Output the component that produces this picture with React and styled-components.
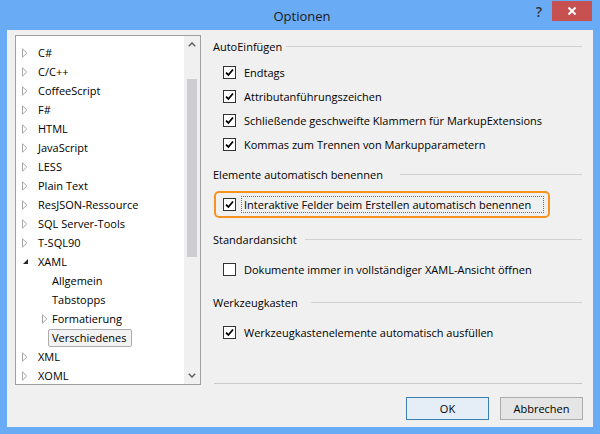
import React from 'react';
import styled, { createGlobalStyle } from 'styled-components';

const GlobalStyle = createGlobalStyle`
  html, body {
    margin: 0;
    padding: 0;
    background: #ffffff;
  }
  body {
    font-family: "Open Sans", "Noto Sans", sans-serif;
    font-size: 11px;
    color: #000;
  }
`;

const Window = styled.div`
  width: 600px;
  height: 434px;
  box-sizing: border-box;
  background-color: #6aabf5;
  padding: 0 7px 7px 7px;
  display: flex;
  flex-direction: column;
`;

const TitleBar = styled.div`
  height: 30px;
  display: flex;
  align-items: flex-start;
  position: relative;
`;

const Title = styled.div`
  flex: 1;
  text-align: center;
  font-size: 13px;
  line-height: 32px;
  color: #1a1a1a;
  padding-left: 4px;
`;

const TitleButtons = styled.div`
  position: absolute;
  right: 1px;
  top: 1px;
  display: flex;
  align-items: flex-start;
`;

const HelpButton = styled.div`
  width: 26px;
  height: 20px;
  font-size: 14px;
  font-weight: 600;
  line-height: 22px;
  text-align: center;
  color: #333;
`;

const CloseButton = styled.div`
  width: 40px;
  height: 20px;
  background-color: #c75050;
  display: flex;
  align-items: center;
  justify-content: center;
`;

const Client = styled.div`
  flex: 1;
  background-color: #f0f0f0;
  display: flex;
  flex-direction: column;
`;

const Main = styled.div`
  display: flex;
  padding-top: 5px;
  height: 350px;
`;

const TreeBox = styled.div`
  margin-left: 8px;
  width: 186px;
  height: 350px;
  box-sizing: border-box;
  border: 1px solid #a0a0a0;
  background: #fff;
  display: flex;
  overflow: hidden;
`;

const TreeList = styled.div`
  flex: 1;
  padding-top: 7px;
  overflow: hidden;
`;

const TreeRow = styled.div`
  height: 19px;
  display: flex;
  align-items: center;
  padding-left: ${p => (p.$level ? 26 : 6)}px;
  white-space: nowrap;
`;

const Expander = styled.div`
  width: ${p => (p.$level ? 10 : 16)}px;
  flex: none;
  display: flex;
  align-items: center;
`;

const TreeLabel = styled.span`
  line-height: 16px;
  padding: 0 4px 0 3px;
  margin-left: -4px;
  border: 1px solid ${p => (p.$selected ? '#adadad' : 'transparent')};
  background: ${p => (p.$selected ? '#f2f2f2' : 'transparent')};
  border-radius: 2px;
`;

const ScrollBar = styled.div`
  width: 16px;
  background: #f0f0f0;
  display: flex;
  flex-direction: column;
  align-items: center;
`;

const ScrollArrow = styled.div`
  height: 17px;
  display: flex;
  align-items: center;
  justify-content: center;
`;

const ScrollTrack = styled.div`
  flex: 1;
  width: 100%;
  padding-top: 26px;
  box-sizing: border-box;
  display: flex;
  justify-content: center;
`;

const Thumb = styled.div`
  width: 10px;
  height: 178px;
  background: #cdcdd1;
`;

const Panel = styled.div`
  flex: 1;
  margin: 0 11px 0 12px;
  display: flex;
  flex-direction: column;
`;

const Group = styled.div`
  margin-top: ${p => p.$top}px;
`;

const GroupHeader = styled.div`
  height: 20px;
  display: flex;
  align-items: center;
`;

const HeaderText = styled.span`
  width: ${p => p.$w}px;
  flex: none;
  white-space: nowrap;
`;

const HeaderLine = styled.div`
  flex: 1;
  height: 1px;
  background: #d2d2d2;
`;

const Rows = styled.div`
  margin-top: ${p => p.$top}px;
`;

const CheckRow = styled.div`
  height: 24px;
  display: flex;
  align-items: center;
  padding-left: 10px;
  gap: 8px;
  white-space: nowrap;
`;

const Highlight = styled.div`
  margin-left: 1px;
  width: 336px;
  height: 27px;
  box-sizing: border-box;
  border: 2px solid #f7931e;
  border-radius: 5px;
  display: flex;
  align-items: center;
  padding-left: 7px;
  gap: 5px;
`;

const FocusLabel = styled.span`
  border: 1px dotted #6d6d6d;
  padding: 0 3px 0 2px;
  width: 303px;
  box-sizing: border-box;
  line-height: 15px;
  white-space: nowrap;
`;

const Box = styled.div`
  width: 13px;
  height: 13px;
  box-sizing: border-box;
  border: 1px solid #333;
  background: #fff;
  flex: none;
  display: flex;
  align-items: center;
  justify-content: center;
`;

const Separator = styled.div`
  margin-top: auto;
  margin-left: 1px;
  height: 1px;
  background: #c8c8c8;
  margin-bottom: 1px;
`;

const Footer = styled.div`
  display: flex;
  justify-content: flex-end;
  gap: 11px;
  margin-top: 12px;
  padding-right: 10px;
`;

const Button = styled.button`
  width: 83px;
  height: 23px;
  box-sizing: border-box;
  font-family: inherit;
  font-size: 11px;
  color: #000;
  border: 1px solid ${p => (p.$primary ? '#3c7fb1' : '#acacac')};
  background: ${p => (p.$primary ? '#e5eef7' : '#e5e5e5')};
  padding: 0;
  border-radius: 0;
`;

const Check = ({ checked }) => (
  <Box>
    {checked && (
      <svg width="9" height="9" viewBox="0 0 9 9">
        <path d="M1 4.6 L3.4 7 L8 1.5" fill="none" stroke="#000" strokeWidth="1.8" />
      </svg>
    )}
  </Box>
);

const Arrow = ({ open }) =>
  open ? (
    <svg width="7" height="7" viewBox="0 0 7 7">
      <path d="M6 1 L6 6 L1 6 Z" fill="#262626" />
    </svg>
  ) : (
    <svg width="6" height="10" viewBox="0 0 6 10">
      <path d="M0.5 0.8 L4.8 5 L0.5 9.2 Z" fill="#fff" stroke="#a6a6a6" strokeWidth="1" />
    </svg>
  );

const treeItems = [
  { label: 'C#', arrow: true },
  { label: 'C/C++', arrow: true },
  { label: 'CoffeeScript', arrow: true },
  { label: 'F#', arrow: true },
  { label: 'HTML', arrow: true },
  { label: 'JavaScript', arrow: true },
  { label: 'LESS', arrow: true },
  { label: 'Plain Text', arrow: true },
  { label: 'ResJSON-Ressource', arrow: true },
  { label: 'SQL Server-Tools', arrow: true },
  { label: 'T-SQL90', arrow: true },
  { label: 'XAML', arrow: true, open: true },
  { label: 'Allgemein', level: 1 },
  { label: 'Tabstopps', level: 1 },
  { label: 'Formatierung', level: 1, arrow: true },
  { label: 'Verschiedenes', level: 1, selected: true },
  { label: 'XML', arrow: true },
  { label: 'XOML', arrow: true },
];

const autoInsert = [
  'Endtags',
  'Attributanführungszeichen',
  'Schließende geschweifte Klammern für MarkupExtensions',
  'Kommas zum Trennen von Markupparametern',
];

export default function App() {
  return (
    <>
      <GlobalStyle />
      <Window>
        <TitleBar>
          <Title>Optionen</Title>
          <TitleButtons>
            <HelpButton>?</HelpButton>
            <CloseButton>
              <svg width="10" height="10" viewBox="0 0 10 10">
                <path d="M1.5 1.5 L8.5 8.5 M8.5 1.5 L1.5 8.5" stroke="#fff" strokeWidth="2" />
              </svg>
            </CloseButton>
          </TitleButtons>
        </TitleBar>
        <Client>
          <Main>
            <TreeBox>
              <TreeList>
                {treeItems.map(item => (
                  <TreeRow key={item.label} $level={item.level}>
                    <Expander $level={item.level}>
                      {item.arrow && <Arrow open={item.open} />}
                    </Expander>
                    <TreeLabel $selected={item.selected}>{item.label}</TreeLabel>
                  </TreeRow>
                ))}
              </TreeList>
              <ScrollBar>
                <ScrollArrow>
                  <svg width="8" height="5" viewBox="0 0 8 5">
                    <path d="M0.8 4.2 L4 1 L7.2 4.2" fill="none" stroke="#606060" strokeWidth="1.5" />
                  </svg>
                </ScrollArrow>
                <ScrollTrack>
                  <Thumb />
                </ScrollTrack>
                <ScrollArrow>
                  <svg width="8" height="5" viewBox="0 0 8 5">
                    <path d="M0.8 0.8 L4 4 L7.2 0.8" fill="none" stroke="#606060" strokeWidth="1.5" />
                  </svg>
                </ScrollArrow>
              </ScrollBar>
            </TreeBox>
            <Panel>
              <Group $top={1}>
                <GroupHeader>
                  <HeaderText $w={73}>AutoEinfügen</HeaderText>
                  <HeaderLine />
                </GroupHeader>
                <Rows $top={4}>
                  {autoInsert.map(text => (
                    <CheckRow key={text}>
                      <Check checked />
                      <span>{text}</span>
                    </CheckRow>
                  ))}
                </Rows>
              </Group>
              <Group $top={8}>
                <GroupHeader>
                  <HeaderText $w={187}>Elemente automatisch benennen</HeaderText>
                  <HeaderLine />
                </GroupHeader>
                <Rows $top={7}>
                  <Highlight>
                    <Check checked />
                    <FocusLabel>Interaktive Felder beim Erstellen automatisch benennen</FocusLabel>
                  </Highlight>
                </Rows>
              </Group>
              <Group $top={11}>
                <GroupHeader>
                  <HeaderText $w={92}>Standardansicht</HeaderText>
                  <HeaderLine />
                </GroupHeader>
                <Rows $top={8}>
                  <CheckRow>
                    <Check />
                    <span>Dokumente immer in vollständiger XAML-Ansicht öffnen</span>
                  </CheckRow>
                </Rows>
              </Group>
              <Group $top={11}>
                <GroupHeader>
                  <HeaderText $w={98}>Werkzeugkasten</HeaderText>
                  <HeaderLine />
                </GroupHeader>
                <Rows $top={8}>
                  <CheckRow>
                    <Check checked />
                    <span>Werkzeugkastenelemente automatisch ausfüllen</span>
                  </CheckRow>
                </Rows>
              </Group>
              <Separator />
            </Panel>
          </Main>
          <Footer>
            <Button $primary>OK</Button>
            <Button>Abbrechen</Button>
          </Footer>
        </Client>
      </Window>
    </>
  );
}
